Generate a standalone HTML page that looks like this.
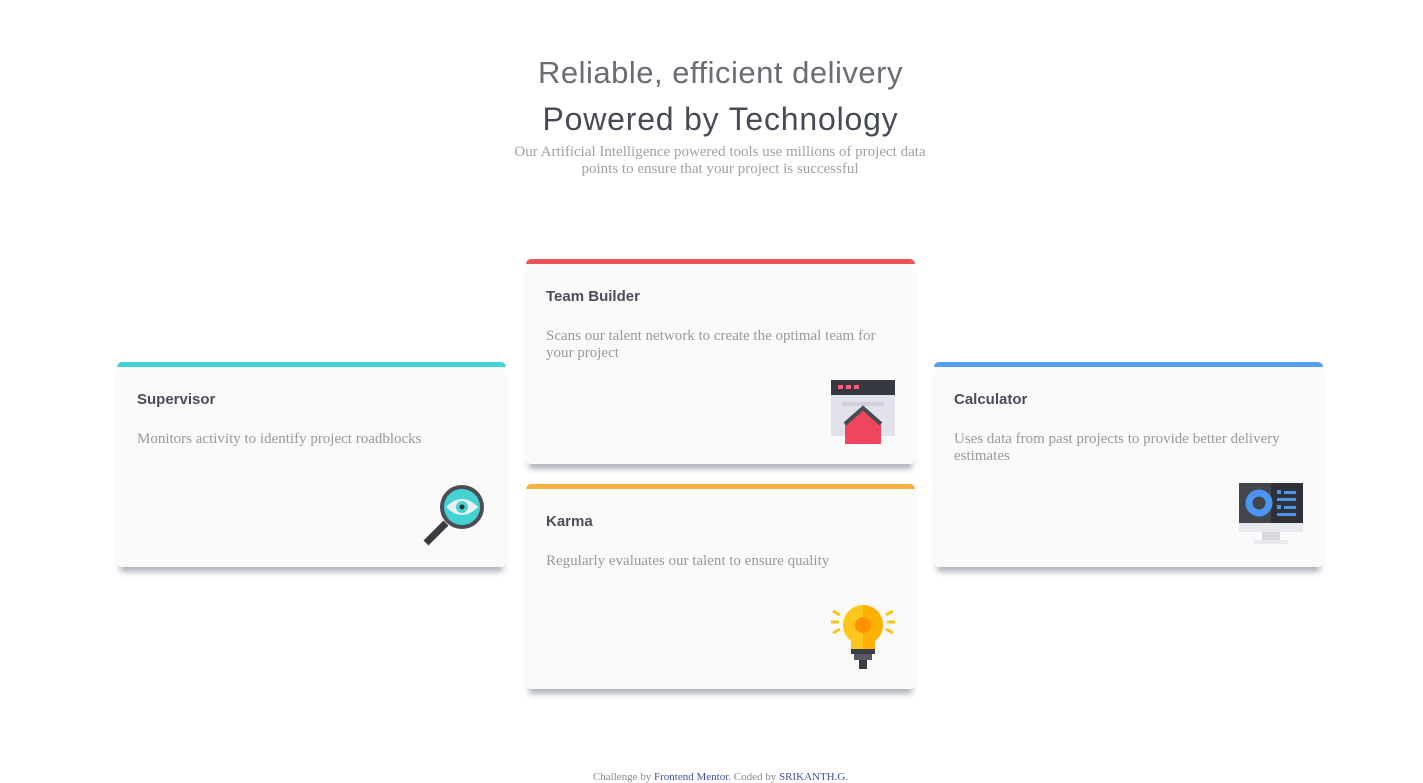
<!DOCTYPE html>
<html><head><style>
body{margin:0;background:#fff;width:1423px;height:782px;position:relative;overflow:hidden}
.h1{position:absolute;top:55px;left:9px;width:1423px;text-align:center;font:400 31px "Liberation Sans",sans-serif;color:#6a6c76;letter-spacing:0.5px}
.h2{position:absolute;top:101px;left:9px;width:1423px;text-align:center;font:400 32px "Liberation Sans",sans-serif;color:#474a58;letter-spacing:0.8px}
.p{position:absolute;top:144px;left:500px;width:440px;text-align:center;font:15px/17px "Liberation Serif",serif;color:#a0a0a8}
.card{position:absolute;width:389px;height:200px;background:#fafafa;border-radius:5px;box-shadow:0 8px 6px -3px rgba(80,90,110,.45);border-top:5px solid}
.card h3{position:absolute;left:20px;top:24px;margin:0;font:bold 15px "Liberation Sans",sans-serif;color:#4b4d5a}
.card p{position:absolute;left:20px;top:64px;width:350px;margin:0;font:15px/17px "Liberation Serif",serif;color:#999}
.card svg{position:absolute;right:20px;bottom:20px}
.f{position:absolute;top:771px;left:9px;width:1423px;text-align:center;font:11px "Liberation Serif",serif;color:#888}
.f span{color:#3e52a3}
</style></head><body>
<div class="h1">Reliable, efficient delivery</div>
<div class="h2">Powered by Technology</div>
<div class="p">Our Artificial Intelligence powered tools use millions of project data points to ensure that your project is successful</div>

<div class="card" style="left:117px;top:362px;border-color:#44d3d2">
<h3>Supervisor</h3><p>Monitors activity to identify project roadblocks</p>
<svg width="64" height="64" viewBox="0 0 64 64"><line x1="4" y1="60" x2="24" y2="40" stroke="#3a3d42" stroke-width="7"/><circle cx="40" cy="24" r="22" fill="#4b4f55"/><circle cx="40" cy="24" r="18" fill="#44d3d2"/><path d="M24 24 Q40 8 56 24 Q40 40 24 24Z" fill="#eceef2"/><circle cx="40" cy="24" r="6" fill="#44d3d2"/><circle cx="40" cy="24" r="2.5" fill="#333"/></svg>
</div>

<div class="card" style="left:526px;top:259px;border-color:#ea5454">
<h3>Team Builder</h3><p>Scans our talent network to create the optimal team for your project</p>
<svg width="64" height="64" viewBox="0 0 64 64"><rect x="0" y="0" width="64" height="56" fill="#e2e3ea"/><rect x="0" y="0" width="64" height="15" fill="#363a40"/><rect x="7" y="5" width="5" height="4" fill="#ff5b72"/><rect x="15" y="5" width="5" height="4" fill="#ff5b72"/><rect x="23" y="5" width="5" height="4" fill="#ff5b72"/><rect x="11" y="22" width="42" height="4" fill="#cfd0d8"/><path d="M14 44 L32 28 L50 44 V64 H14Z" fill="#f0455e"/><path d="M14 44 L32 28 L50 44" fill="none" stroke="#474b52" stroke-width="4"/></svg>
</div>

<div class="card" style="left:526px;top:484px;border-color:#fcaf41">
<h3>Karma</h3><p>Regularly evaluates our talent to ensure quality</p>
<svg width="64" height="64" viewBox="0 0 64 64"><g stroke="#fcc419" stroke-width="3"><line x1="0" y1="17" x2="8" y2="17"/><line x1="56" y1="17" x2="64" y2="17"/><line x1="2" y1="6" x2="9" y2="10"/><line x1="62" y1="6" x2="55" y2="10"/><line x1="2" y1="28" x2="9" y2="24"/><line x1="62" y1="28" x2="55" y2="24"/></g><path d="M32 0 A20 20 0 0 1 44 36 V44 H20 V36 A20 20 0 0 1 32 0Z" fill="#ffc61b"/><path d="M32 0 A20 20 0 0 1 44 36 V44 H32Z" fill="#ffb000"/><circle cx="32" cy="20" r="8" fill="#ff9100"/><rect x="20" y="44" width="24" height="5" fill="#3a3d42"/><rect x="23" y="49" width="18" height="6" fill="#555a60"/><rect x="28" y="55" width="8" height="9" fill="#3a3d42"/></svg>
</div>

<div class="card" style="left:934px;top:362px;border-color:#549ef2">
<h3>Calculator</h3><p>Uses data from past projects to provide better delivery estimates</p>
<svg width="64" height="64" viewBox="0 0 64 64"><rect x="0" y="0" width="64" height="40" fill="#42464c"/><rect x="32" y="0" width="32" height="40" fill="#2e3237"/><rect x="0" y="40" width="64" height="9" fill="#e8e9ef"/><rect x="23" y="49" width="18" height="8" fill="#d8d9e0"/><rect x="15" y="57" width="34" height="4" fill="#e8e9ef"/><circle cx="20" cy="20" r="10" fill="none" stroke="#4c94f0" stroke-width="7"/><g fill="#4c94f0"><rect x="38" y="7" width="4" height="4"/><rect x="45" y="8" width="12" height="3"/><rect x="38" y="15" width="19" height="3"/><rect x="38" y="22" width="4" height="4"/><rect x="45" y="23" width="12" height="3"/><rect x="38" y="30" width="19" height="3"/></g></svg>
</div>

<div class="f">Challenge by <span>Frontend Mentor</span>. Coded by <span>SRIKANTH.G</span>.</div>
</body></html>
